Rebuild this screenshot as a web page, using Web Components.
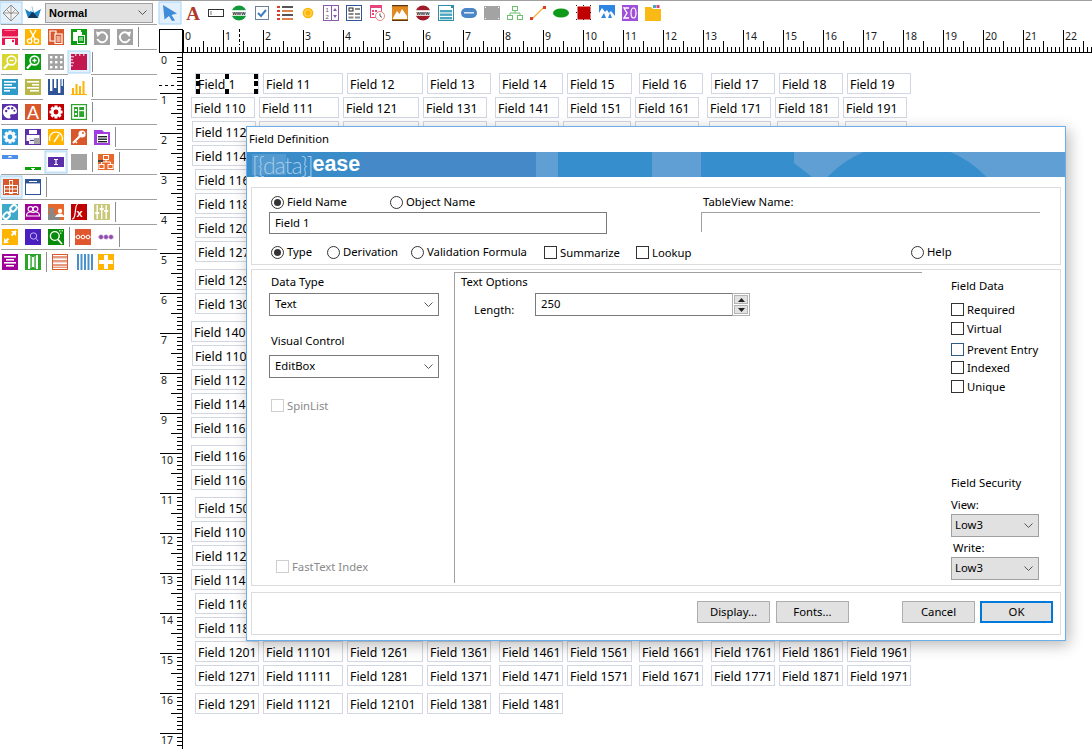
<!DOCTYPE html>
<html lang="en">
<head>
<meta charset="utf-8">
<title>Field Definition</title>
<style>
html,body{margin:0;padding:0;background:#fff;overflow:hidden}
body{width:1092px;height:749px;font:12.3px "Noto Sans","Open Sans",sans-serif;color:#000}
</style>
</head>
<body>
<ui-app>
  <div slot="left">
    <tool-row h="23" rule="1-157">
      <tool-icon name="diamond" on style="margin-left:1px"></tool-icon>
      <tool-icon name="origami" style="margin-left:-1px"></tool-icon>
      <ui-select style="width:108px;height:20px;margin-left:-3px" gray bold>Normal</ui-select>
    </tool-row>
    <tool-row rule="1-20 22-45 114-157">
      <tool-icon name="save"></tool-icon><tool-icon name="cut"></tool-icon><tool-icon name="copy"></tool-icon><tool-icon name="paste"></tool-icon><tool-icon name="undo"></tool-icon><tool-icon name="redo"></tool-icon><tool-sep></tool-sep>
    </tool-row>
    <tool-row rule="1-22 45-68 91-157">
      <tool-icon name="zoomout"></tool-icon><tool-icon name="zoomin"></tool-icon><tool-icon name="grid"></tool-icon><tool-icon name="redblock" on></tool-icon><tool-sep></tool-sep>
    </tool-row>
    <tool-row rule="1-43 91-157">
      <tool-icon name="alignl"></tool-icon><tool-icon name="alignr"></tool-icon><tool-icon name="hang"></tool-icon><tool-icon name="bars"></tool-icon><tool-sep></tool-sep>
    </tool-row>
    <tool-row rule="1-157">
      <tool-icon name="palette"></tool-icon><tool-icon name="fontA"></tool-icon><tool-icon name="gearred"></tool-icon><tool-icon name="board"></tool-icon><tool-sep></tool-sep>
    </tool-row>
    <tool-row rule="1-68 115-157">
      <tool-icon name="gearblue"></tool-icon><tool-icon name="printer"></tool-icon><tool-icon name="gauge"></tool-icon><tool-icon name="key"></tool-icon><tool-icon name="folderdoc"></tool-icon><tool-sep></tool-sep>
    </tool-row>
    <tool-row rule="1-157">
      <tool-icon name="bartop"></tool-icon><tool-icon name="barbottom"></tool-icon><tool-icon name="purplebox" on></tool-icon><tool-icon name="gray"></tool-icon><tool-sep></tool-sep><tool-icon name="network"></tool-icon><tool-sep></tool-sep>
    </tool-row>
    <tool-row rule="1-157">
      <tool-icon name="stack" on style="margin-left:1px;margin-right:6px"></tool-icon><tool-icon name="window"></tool-icon><tool-sep></tool-sep>
    </tool-row>
    <tool-row rule="1-157">
      <tool-icon name="link"></tool-icon><tool-icon name="people"></tool-icon><tool-icon name="person"></tool-icon><tool-icon name="fx"></tool-icon><tool-icon name="sliders"></tool-icon><tool-sep></tool-sep>
    </tool-row>
    <tool-row rule="1-157">
      <tool-icon name="expand"></tool-icon><tool-icon name="magpurple"></tool-icon><tool-icon name="maggreen"></tool-icon><tool-sep></tool-sep><tool-icon name="dotsorange"></tool-icon><tool-icon name="dotspurple"></tool-icon><tool-sep></tool-sep>
    </tool-row>
    <tool-row>
      <tool-icon name="center"></tool-icon><tool-icon name="colsgreen"></tool-icon><tool-sep></tool-sep><tool-icon name="rowsorange" style="margin-right:9px"></tool-icon><tool-icon name="colsblue" style="margin-right:5px"></tool-icon><tool-icon name="plus"></tool-icon>
    </tool-row>
  </div>
  <top-tools slot="top">
    <tool-icon name="arrow" on></tool-icon><tool-icon name="letterA"></tool-icon><tool-icon name="textbox"></tool-icon><tool-icon name="wwwgreen"></tool-icon><tool-icon name="check"></tool-icon><tool-icon name="list"></tool-icon><tool-icon name="radio"></tool-icon><tool-icon name="spin"></tool-icon><tool-icon name="table"></tool-icon><tool-icon name="calendar"></tool-icon><tool-icon name="image"></tool-icon><tool-icon name="wwwred"></tool-icon><tool-icon name="tabbed"></tool-icon><tool-icon name="button"></tool-icon><tool-icon name="grayh"></tool-icon><tool-icon name="tree"></tool-icon><tool-icon name="line"></tool-icon><tool-icon name="ellipse"></tool-icon><tool-icon name="redsq"></tool-icon><tool-icon name="mountain"></tool-icon><tool-icon name="sigma"></tool-icon><tool-icon name="folder"></tool-icon>
  </top-tools>
  <form-canvas slot="canvas"></form-canvas>
  <field-dialog slot="dialog"></field-dialog>
</ui-app>

<script>
/* ---------- helpers ---------- */
function define(name, css, html, extra){
  class C extends HTMLElement{
    constructor(){super();this.attachShadow({mode:'open'}).innerHTML='<style>'+css+'</style>'+html;}
    connectedCallback(){ if(extra) extra.call(this,this.shadowRoot); }
  }
  customElements.define(name,C);
}
const r=(x,y,w,h,f,o)=>`<rect x="${x}" y="${y}" width="${w}" height="${h}" fill="${f}"${o?` rx="${o}"`:''}/>`;
const bg=(f)=>r(0,0,16,16,f);
const W='#fff';
const gear=(f)=>bg(f)+`<g fill="#fff"><circle cx="8" cy="8" r="5"/><rect x="6.5" y="1.5" width="3" height="13"/><rect x="1.5" y="6.5" width="13" height="3"/><rect x="6.5" y="1.5" width="3" height="13" transform="rotate(45 8 8)"/><rect x="6.5" y="1.5" width="3" height="13" transform="rotate(-45 8 8)"/></g><circle cx="8" cy="8" r="2.4" fill="${f}"/>`;
const mag=(f,s,extra)=>bg(f)+`<circle cx="9.5" cy="6.5" r="4.4" fill="none" stroke="${s}" stroke-width="1.6"/><path d="M6.2 10L2 14.4" stroke="${s}" stroke-width="2.2"/>`+(extra||'');
const www=(c)=>`<circle cx="8" cy="8" r="7.6" fill="${c}"/><rect x="0" y="5.2" width="16" height="5.6" fill="#fff"/><text x="8" y="10" text-anchor="middle" font-family="Liberation Sans" font-size="5.6" font-weight="700" fill="#222">www</text>`;
const ICONS={
diamond:`<path d="M8 0L16 8 8 16 0 8Z" fill="#f2f2f2" stroke="#8a8a8a"/><path d="M8 0V16M0 8H16M3 4L8 9 13 4" stroke="#8a8a8a" fill="none" stroke-width=".8"/>`,
origami:`<path d="M0 4L5 7 7 1 9 8 16 4 13 13 3 13Z" fill="#1c86c8"/><path d="M3 13L7 7 9 8 13 13Z" fill="#12395c"/><path d="M5 6L7 1 8 7Z" fill="#fff"/>`,
save:bg('#e8174f')+r(3,0,10,6.5,'#e8174f')+r(2.5,1,11,1,'#f77a9c')+r(0,7.5,16,1.2,W)+r(3,10,10,4,W)+r(3,14,10,2,W)+r(10,10.8,2,2.4,'#e8174f'),
cut:bg('#ffb400')+`<path d="M5 1L10 10M11 1L6 10" stroke="#fff" stroke-width="1.5"/><circle cx="4.6" cy="12" r="2.2" fill="none" stroke="#fff" stroke-width="1.3"/><circle cx="11.4" cy="12" r="2.2" fill="none" stroke="#fff" stroke-width="1.3"/>`,
copy:bg('#d9582b')+`<path d="M2 2H8V12H2Z" fill="none" stroke="#fff" stroke-width="1.2"/><path d="M7 5H14V14.5H7Z" fill="#d9582b" stroke="#fff" stroke-width="1.2"/><path d="M8.5 8H12.5M8.5 10H12.5M8.5 12H12.5" stroke="#fff"/>`,
paste:bg('#0b9c12')+`<path d="M2 3H6V1H10V3H11V6H14V15H6V12H2Z" fill="#fff"/><path d="M7 7H13V14H7Z" fill="#0b9c12"/><path d="M8 9H12M8 11H12" stroke="#fff"/>`,
undo:bg('#a3a3a3')+`<path d="M4 5.4A5 5 0 1 1 3.4 10" fill="none" stroke="#fff" stroke-width="2"/><path d="M2 2.6L7.6 3.6 3.4 8Z" fill="#fff"/>`,
redo:bg('#a3a3a3')+`<path d="M12 5.4A5 5 0 1 0 12.6 10" fill="none" stroke="#fff" stroke-width="2"/><path d="M14 2.6L8.4 3.6 12.6 8Z" fill="#fff"/>`,
zoomout:mag('#d9d62e','#fff','<path d="M7.4 6.5H11.6" stroke="#fff" stroke-width="1.4"/>'),
zoomin:mag('#0b9c12','#fff','<path d="M7.4 6.5H11.6M9.5 4.4V8.6" stroke="#fff" stroke-width="1.4"/>'),
grid:bg('#a3a3a3')+[2,7,12].map(x=>[2,7,12].map(y=>r(x,y,2.4,2.4,W)).join('')).join(''),
redblock:bg('#c2174f')+r(0,2,3,1.4,'#f3b0c4')+r(0,5,2,1.4,'#f3b0c4')+r(0,8,3,1.4,'#f3b0c4')+r(0,11,2,1.4,'#f3b0c4')+r(4,0,1.4,2,'#f3b0c4')+r(8,0,1.4,2,'#f3b0c4')+r(12,0,1.4,2,'#f3b0c4'),
alignl:bg('#2f9bc9')+r(2,2,12,1.6,W)+r(2,5,8,1.6,W)+r(2,8,12,1.6,W)+r(2,11,6,1.6,W),
alignr:bg('#b8b84a')+r(2,2,12,1.6,W)+r(7,5,7,1.6,W)+r(2,8,12,1.6,W)+r(5,11,9,1.6,W),
hang:bg('#2f5597')+r(2,0,2.4,12,W)+r(6,0,2.4,9,W)+r(10,0,2.4,14,W)+r(13.5,0,1.4,7,W),
bars:r(0,0,16,16,W)+r(1,9,2,7,'#ffb400')+r(4.5,5,2,11,'#ffb400')+r(8,7,2,9,'#ffb400')+r(11.5,2,2,14,'#ffb400')+r(0,15,16,1,'#ffb400'),
palette:bg('#5b2fa8')+`<path d="M8 1.5C3.5 1.5 1 4.5 1 8s2.6 6.5 6 6.5c1.8 0 1.8-1.3 1.2-2.2-.6-1 .1-2 1.3-2H12c2 0 3-1.2 3-3 0-3.4-3-5.8-7-5.8Z" fill="#fff"/><g fill="#5b2fa8"><circle cx="4.2" cy="7" r="1.2"/><circle cx="6.6" cy="4.2" r="1.2"/><circle cx="10.2" cy="4.2" r="1.2"/><circle cx="12.4" cy="6.8" r="1"/></g>`,
fontA:bg('#d9582b')+`<text x="8" y="14.5" text-anchor="middle" font-family="Liberation Sans" font-size="18" fill="#fff">A</text>`,
gearred:gear('#c00000'),
board:r(0,0,16,16,'#2ca52c')+r(1.2,1.2,13.6,13.6,W)+r(3,3,10,10,'#2ca52c')+r(7,3,1.2,10,W)+r(8.2,6,4.8,1.2,W)+r(3.8,5,2.2,2,W)+r(3.8,9,2.2,2,W),
gearblue:gear('#2f9bd9'),
printer:bg('#5b2fa8')+r(4,1,8,4,W)+r(1.5,6,13,6,W)+r(4,9,7,6,'#eee')+r(9,9,6,6,'#a3a3a3')+r(5,11,4,1,'#5b2fa8'),
gauge:bg('#ffb400')+`<path d="M2 12A6.5 6.5 0 1 1 14 12" fill="none" stroke="#fff" stroke-width="1.2"/><path d="M6 13L11 5.5" stroke="#fff" stroke-width="1.4"/>`,
key:bg('#d9582b')+`<circle cx="11" cy="5" r="3.6" fill="#fff"/><circle cx="12" cy="4" r="1" fill="#d9582b"/><path d="M9 7L2 14" stroke="#fff" stroke-width="2.2"/><path d="M4 12L6 14" stroke="#fff" stroke-width="1.4"/>`,
folderdoc:`<path d="M0 1H8L10 3H16V16H0Z" fill="#a03ce0"/>`+r(3,5,11,9,W)+r(4,7,9,1.4,'#222')+r(4,9.5,9,1.4,'#222')+r(4,12,9,1.4,'#222'),
bartop:r(0,1,16,4,'#4a90e8')+r(6,2.5,4,1,W)+r(7,2,2,1,W),
barbottom:r(0,13,16,3,'#0aa00a')+r(6,14,4,1,W)+r(7,14,2,2,W),
purplebox:r(-1,-1,18,18,W)+r(0,3,16,10,'#5b2fa8')+r(6,5,4,1,W)+r(7.4,5,1.2,6,W)+r(6,10,4,1,W),
gray:bg('#a3a3a3'),
network:bg('#e8672b')+`<g fill="none" stroke="#fff" stroke-width="1"><rect x="5.5" y="1.5" width="5" height="4"/><rect x="1" y="10.5" width="5" height="4"/><rect x="10" y="10.5" width="5" height="4"/><path d="M8 5.5V8M3.5 10.5V8H12.5V10.5"/></g>`+r(0,6,5,2,'#444'),
stack:bg('#d9582b')+r(6.2,1,3.6,14,W)+r(1,6,14,1,W)+r(1,9.5,14,1,W)+r(1,6,1,9,W)+r(14,6,1,9,W)+r(1,13,14,1,W)+r(6.2,1,3.6,1,W)+r(7,2,2,3.5,'#d9582b')+r(7,7,2,2.5,'#d9582b')+r(7,10.5,2,2.5,'#d9582b'),
window:r(0,0,16,16,'#2f5597')+r(1,1,14,14,W)+r(1,1,14,3.4,'#2f5597')+r(4,2,8,1,W),
link:bg('#3fa9c9')+`<g fill="none" stroke="#fff" stroke-width="2"><rect x="8" y="1.8" width="7" height="5" rx="2.4" transform="rotate(-45 11.5 4.3)"/><rect x="1" y="9.2" width="7" height="5" rx="2.4" transform="rotate(-45 4.5 11.7)"/><path d="M6 10L10 6"/></g>`,
people:bg('#a0009a')+`<g fill="none" stroke="#fff" stroke-width="1.1"><circle cx="5.5" cy="5" r="2.4"/><circle cx="10.5" cy="5" r="2.4"/><path d="M1.5 12c0-3 2-4 4-4s2.500 .5 2.500 1c0-.5 .5-1 2.500-1s4 1 4 4Z"/></g>`,
person:bg('#e8672b')+`<circle cx="3.5" cy="6" r="2.8" fill="#888"/><path d="M0 16V11c0-2 2-3 3.500-3s4 1 4 3H12V16Z" fill="#888"/><circle cx="12" cy="7" r="2.2" fill="#fff"/><path d="M7 13c1-2 3-3.500 5-3.500s3 1 4 2.500V13Z" fill="#fff"/>`,
fx:bg('#c00000')+`<path d="M7 0C4.500 0 5 4 4 10 3.500 14 2.500 15 1 15" fill="none" stroke="#fff" stroke-width="1.2"/><text x="5.500" y="13" font-family="Liberation Sans" font-weight="700" font-size="11" fill="#fff">x</text>`,
sliders:bg('#c8c878')+r(2.500,1,1.4,14,W)+r(7,1,1.4,14,W)+r(11.500,1,1.4,14,W)+r(1.200,8,4,2,W)+r(5.700,4,4,2,W)+r(10.200,6,4,2,W),
expand:bg('#ffb400')+`<path d="M2 14L6.500 9.500M14 2L9.500 6.500" stroke="#fff" stroke-width="2"/><path d="M2 9V14H7ZM14 7V2H9Z" fill="#fff"/>`,
magpurple:bg('#4a1fc0')+`<circle cx="8.500" cy="7" r="3.200" fill="none" stroke="#c9b8f2" stroke-width="1"/><path d="M11 9.500L13 12" stroke="#c9b8f2"/>`,
maggreen:bg('#0a8a0a')+`<circle cx="6.800" cy="7" r="4.400" fill="none" stroke="#fff" stroke-width="1.400"/><path d="M10 10.500L14 15" stroke="#fff" stroke-width="1.800"/>`+r(11,1,1.500,1.500,'#9fe89f')+r(13.500,1,1.500,1.500,'#9fe89f')+r(12,3.500,1.500,1.500,'#9fe89f'),
dotsorange:bg('#e0562f')+`<path d="M0 8H16" stroke="#f5c2b0"/>`+[3,8,13].map(x=>`<circle cx="${x}" cy="8" r="1.800" fill="#e0562f" stroke="#fff"/>`).join(''),
dotspurple:`<path d="M0 8H16" stroke="#c9a3d6"/>`+[3,8,13].map(x=>`<circle cx="${x}" cy="8" r="2.200" fill="#8e4aa8" stroke="#c9a3d6" stroke-width=".6"/>`).join(''),
center:bg('#a0009a')+r(2,2,12,1.600,W)+r(4,5,8,1.600,W)+r(2,8,12,1.600,W)+r(4,11,8,1.600,W),
colsgreen:bg('#2aa52a')+r(3,1,2,14,W)+r(7,3,2,10,W)+r(11,1,2,14,W)+r(5.500,2,.8,12,'#bfe8bf')+r(9.500,2,.8,12,'#bfe8bf'),
rowsorange:r(0,0,16,16,'#d9582b')+r(1,1,14,14,'#fff')+[2,6,10].map(y=>r(1,y,14,2.400,'#e49a80')).join('')+r(1,13,14,1,'#e49a80'),
colsblue:[0,3.500,7,10.500,14].map(x=>r(x,0,2,16,'#4a90c8')).join(''),
plus:bg('#ffb400')+r(6,1,4,14,W)+r(1,6,14,4,W),
arrow:`<path d="M1 0L15 8.500 9.500 10 13 15.500 10 16 7 11 2.500 14.500Z" fill="#3f8dd8"/>`,
letterA:`<text x="8" y="15" text-anchor="middle" font-family="Liberation Serif" font-weight="700" font-size="19" fill="#b0392b">A</text>`,
textbox:r(0,4,16,8,'#333')+r(1,5,14,6,W)+r(2,6,2,4,'#bbb'),
wwwgreen:www('#109a3a'),
check:r(1,1,14,14,'#6d7f99')+r(2,2,12,12,W)+`<path d="M4 8L7 11 12 5" fill="none" stroke="#3f7fc0" stroke-width="2"/>`,
list:r(0,1,3,2,'#d9402b')+r(5,1,11,2,'#555')+r(0,5,3,2,'#d9402b')+r(5,5,11,2,'#d9824b')+r(0,9,3,2,'#d9402b')+r(5,9,11,2,'#555')+r(0,13,3,2,'#d9402b')+r(5,13,11,2,'#d9824b'),
radio:`<circle cx="8" cy="8" r="4.600" fill="#ffd35c" stroke="#ffb400" stroke-width="1.500"/><circle cx="8" cy="8" r="2.500" fill="#ffb400"/>`,
spin:r(0,0,16,16,'#8a5aa8')+r(1,1,14,14,W)+r(8,1,1,14,'#8a5aa8')+`<path d="M10 6L12 3 14 6ZM10 10L12 13 14 10Z" fill="#8a5aa8"/><text x="2.500" y="7" font-family="Liberation Sans" font-size="6" fill="#555">1</text><text x="2.500" y="14" font-family="Liberation Sans" font-size="6" fill="#555">2</text>`,
table:r(0,0,16,16,'#2f5597')+r(1,1,14,14,W)+r(2.500,2.500,5,4,'#222')+r(3.500,3.500,3,2,W)+r(9,3,5,2,'#8a8a8a')+r(2.500,8,5,2,'#8a8a8a')+r(9,8,5,2,'#8a8a8a')+r(2.500,11.500,5,2,'#8a8a8a')+r(9,11.500,5,2,'#8a8a8a'),
calendar:r(1,0,12,13,'#e8467a')+r(2,3,10,9,W)+r(3,5,2,2,'#e8467a')+r(6,5,2,2,'#e8467a')+r(3,8,2,2,'#e8467a')+`<circle cx="11" cy="11" r="4.500" fill="#fff" stroke="#d88"/><path d="M11 8.500V11L13 12.500" stroke="#555" fill="none"/>`,
image:r(0,0,16,16,'#e08a20')+r(1.200,1.200,13.600,13.600,'#e08a20')+`<path d="M1 13L5 6 7.500 9 10 4 15 11V14H1Z" fill="#fff"/><path d="M0 0H16V1.200H0ZM0 14.800H16V16H0Z" fill="#5a3a10"/>`,
wwwred:www('#a01a2a'),
tabbed:r(0,0,16,16,'#2f8fa8')+r(1,1,14,14,W)+r(1,1,11,3,'#fff')+r(13,1,2,2,'#2f8fa8')+r(2,5,12,2.400,'#4aa6bf')+r(2,8.500,12,2.400,'#4aa6bf')+r(2,12,12,2.400,'#4aa6bf'),
button:r(0,3,16,10,'#4a86c8',5)+r(3,7,10,1.600,'#d6e6f6'),
grayh:r(0,1,16,14,'#a3a3a3')+r(1,2,1,1,W)+r(14,2,1,1,W)+r(1,13,1,1,W)+r(14,13,1,1,W),
tree:`<g fill="none" stroke="#6dc06d"><rect x="5.500" y="1.500" width="5" height="4"/><rect x=".5" y="10.500" width="5" height="4"/><rect x="10.500" y="10.500" width="5" height="4"/><path d="M8 5.500V8M3 10.500V8H13V10.500"/></g>`,
line:`<path d="M2 14L14 2" stroke="#f2b134" stroke-width="1.200"/>`+r(0,12,3,3,'#d9402b')+r(13,1,3,3,'#d9402b'),
ellipse:`<ellipse cx="8" cy="8" rx="8" ry="4.500" fill="#0f9a1a"/>`,
redsq:r(1.500,1.500,13,13,'#c00000')+[0,7,14].map(x=>[0,14].map(y=>r(x,y,1,1,'#222')).join('')).join('')+r(0,7,1,1,'#222')+r(14,7,1,1,'#222'),
mountain:r(0,0,16,13,'#2f86e0')+`<path d="M0 13V8L3 3 6 7 8 5 10 8 12 6 16 11V13Z" fill="#fff"/><path d="M2 13L5 8 7 13Z M9 13L11 8 13 13Z" fill="#2f86e0"/>`,
sigma:r(0,0,16,16,'#a050d8')+`<path d="M7 3H2L5 8 2 13H7" fill="none" stroke="#fff" stroke-width="1.400"/><ellipse cx="11.500" cy="8" rx="2.500" ry="5" fill="none" stroke="#fff" stroke-width="1.200"/>`,
folder:`<path d="M0 2H6L8 4H16V16H0Z" fill="#fbb915"/>`+r(8,0,3,3,'#4aa6bf')+r(11.500,0,3,3,'#d9467a')
};

/* ---------- page shell ---------- */
define('ui-app',`
 :host{display:grid;grid-template-columns:158px 1fr;width:1092px;height:749px;box-sizing:border-box;border-top:1px solid #a0a0a0;position:relative;overflow:hidden;background:#fff}
 .work{display:grid;grid-template-rows:28px 1fr;min-width:0;height:748px}
 .sheet{display:grid;grid-template-columns:25px 1fr;grid-template-rows:24px 1fr;min-height:0}
 .corner{box-sizing:border-box;margin-left:1px;height:24px;border:1px solid #000;background:#fff}
 .over{position:absolute;left:246px;top:125px}
`,`<div class="left"><slot name="left"></slot></div>
<div class="work"><slot name="top"></slot>
  <div class="sheet"><div class="corner"></div><ruler-h></ruler-h><ruler-v></ruler-v><slot name="canvas"></slot></div>
</div>
<div class="over"><slot name="dialog"></slot></div>`);

define('tool-row',`
 :host{display:block}
 .row{display:flex;align-items:center;padding-left:2px}
 .rule{height:1px;position:relative}
 .rule i{position:absolute;top:0;height:1px;background:#a0a0a0}
`,`<div class="row"><slot></slot></div><div class="rule"></div>`,function(s){
  s.querySelector('.row').style.height=(this.getAttribute('h')||24)+'px';
  const rule=s.querySelector('.rule');
  (this.getAttribute('rule')||'').split(' ').filter(Boolean).forEach(p=>{
    const [a,b]=p.split('-').map(Number);const i=document.createElement('i');
    i.style.left=a+'px';i.style.width=(b-a)+'px';rule.appendChild(i);
  });
});
define('tool-sep',`:host{display:block;flex:none;width:1px;height:20px;background:#8c8c8c;margin-left:-2px;margin-right:5px}`,``);
define('tool-icon',`
 :host{display:block;flex:none;width:16px;height:16px;margin-right:7px;position:relative}
 :host([on]){background:#e2f0fb;box-shadow:0 0 0 2.5px #e2f0fb,0 0 0 3.5px #a6d4f6}
 svg{display:block;width:16px;height:16px;overflow:visible}
`,`<svg viewBox="0 0 16 16" aria-hidden="true"></svg>`,function(s){
  s.querySelector('svg').innerHTML=ICONS[this.getAttribute('name')]||'';
});
define('top-tools',`
 :host{display:flex;align-items:center;height:24px;padding-left:4px;margin-top:0}
 ::slotted(tool-icon){margin-right:7px}
`,`<slot></slot>`);

/* ---------- rulers ---------- */
const NS='font-family="Noto Sans" font-size="10.5" fill="#1c1c1c"';
define('ruler-h',`:host{display:block;height:24px;overflow:hidden}svg{display:block}`,``,function(s){
  let o='';
  for(let x=0;x<909;x+=4){
    const k=x%40===0?1:(x%20===0?2:3);
    const y=k===1?1:(k===2?12:18);
    o+=`<rect x="${x}" y="${y}" width="1" height="${23-y}"/>`;
    if(k===1)o+=`<text x="${x+2}" y="11" ${NS}>${x/40}</text>`;
  }
  o+=`<rect x="0" y="23" width="909" height="1"/><path d="M56 0V16" stroke="#000" stroke-dasharray="2.500 2.500"/>`;
  s.innerHTML+=`<svg width="909" height="24" shape-rendering="crispEdges">${o}</svg>`;
});
define('ruler-v',`:host{display:block;width:25px;overflow:hidden;height:696px}svg{display:block}`,``,function(s){
  let o='';
  for(let y=0;y<696;y+=4){
    const k=y%40===0?1:(y%20===0?2:3);
    const x=k===1?2:(k===2?13:19);
    if(y>0)o+=`<rect x="${x}" y="${y}" width="${25-x}" height="1"/>`;
    if(k===1)o+=`<text x="3" y="${y+11}" ${NS}>${y/40}</text>`;
  }
  o+=`<rect x="24" y="0" width="1" height="696"/><path d="M1 32H20" stroke="#000" stroke-dasharray="3 3"/>`;
  s.innerHTML+=`<svg width="25" height="696" shape-rendering="crispEdges">${o}</svg>`;
});

/* ---------- free canvas of fields ---------- */
define('form-field',`
 :host{position:absolute;display:flex;align-items:center;box-sizing:border-box;height:21px;padding:2px 0 0 2px;border:1px solid #d2d6e2;background:#fff;color:#000;white-space:nowrap;overflow:hidden;font-size:12.3px}
`,`<slot></slot>`);
define('sel-handle',`:host{position:absolute;width:4px;height:5px;background:#000}`,``);
define('form-canvas',`:host{display:block;position:relative;overflow:hidden;height:696px}`,``,function(s){
  const X=183,Y=53;
  const place=(x,y,w,t)=>{const f=document.createElement('form-field');f.style.left=(x-X)+'px';f.style.top=(y-Y)+'px';f.style.width=w+'px';f.textContent=t||'';s.appendChild(f);};
  const c1=[[195,64],[263,80],[347,76],[427,64],[499,64],[567,65],[639,64],[711,64],[779,64],[847,64]];
  const c2=[[191,64],[259,80],[343,76],[423,64],[495,64],[567,64],[635,64],[707,64],[775,64],[843,64]];
  ['1','11','12','13','14','15','16','17','18','19'].forEach((n,i)=>place(c1[i][0],73,c1[i][1],'Field '+n));
  ['110','111','121','131','141','151','161','171','181','191'].forEach((n,i)=>place(c2[i][0],97,c2[i][1],'Field '+n));
  [[259,80],[343,76],[423,64],[495,64],[563,68],[635,64],[709,62],[777,62],[845,62]].forEach(c=>place(c[0],121,c[1],''));
  [[192,121,'112'],[192,145,'114'],[195,169,'116'],[195,193,'118'],[195,217,'120'],[195,241,'127'],[195,269,'129'],[195,293,'130'],
   [191,321,'140'],[192,345,'110'],[191,369,'112'],[191,393,'114'],[191,417,'116'],[191,445,'116'],[191,469,'116'],[195,497,'150'],
   [191,521,'110'],[192,545,'112'],[191,569,'114'],[195,593,'116'],[195,617,'118']].forEach(p=>place(p[0],p[1],64,'Field '+p[2]));
  ['1201','11101','1261','1361','1461','1561','1661','1761','1861','1961'].forEach((n,i)=>place(c1[i][0],641,c1[i][1],'Field '+n));
  ['1271','11111','1281','1371','1471','1571','1671','1771','1871','1971'].forEach((n,i)=>place(c1[i][0],665,c1[i][1],'Field '+n));
  ['1291','11121','12101','1381','1481'].forEach((n,i)=>place(c1[i][0],693,c1[i][1],'Field '+n));
  [[196,74],[225,74],[254,74],[196,81],[254,81],[196,89],[225,89],[254,89]].forEach(h=>{
    const e=document.createElement('sel-handle');e.style.left=(h[0]-X)+'px';e.style.top=(h[1]-Y)+'px';s.appendChild(e);
  });
});

/* ---------- dialog controls ---------- */
define('ui-radio',`
 :host{display:flex;align-items:center;gap:3px;height:13px;white-space:nowrap}
 i{flex:none;box-sizing:border-box;width:13px;height:13px;border:1px solid #333;border-radius:50%;background:#fff;display:flex;align-items:center;justify-content:center}
 :host([checked]) i::after{content:"";width:7px;height:7px;border-radius:50%;background:#333}
 span{padding-bottom:2px}
`,`<i></i><span><slot></slot></span>`);
define('ui-check',`
 :host{display:flex;align-items:center;gap:3px;height:13px;white-space:nowrap}
 i{flex:none;box-sizing:border-box;width:13px;height:13px;border:1px solid #333;background:#fff}
 :host([tint]) i{border-color:#2d5a80}
 :host([disabled]){color:#8a8a8a}
 :host([disabled]) i{border-color:#cfcfcf}
`,`<i></i><span><slot></slot></span>`);
define('ui-select',`
 :host{display:flex;align-items:center;justify-content:space-between;box-sizing:border-box;height:23px;padding:0 5px;border:1px solid #7a7a7a;background:#fff}
 :host([gray]){background:#e1e1e1;border-color:#a0a0a0;padding-left:3px}
 :host([bold]){font:700 11px "Liberation Sans",sans-serif;letter-spacing:.1px;padding-left:3px}
 span{padding-bottom:2px}
 :host([bold]) span{padding-bottom:0}
 svg{flex:none;display:block}
`,`<span><slot></slot></span><svg width="9" height="5" viewBox="0 0 9 5" aria-hidden="true"><path d="M.5 .5L4.500 4.500 8.500 .5" fill="none" stroke="#555" stroke-width="1"/></svg>`);
define('ui-btn',`
 :host{display:flex;align-items:center;justify-content:center;box-sizing:border-box;width:73px;height:22px;padding-bottom:2px;background:#e1e1e1;border:1px solid #adadad}
 :host([primary]){border:2px solid #0078d7}
`,`<slot></slot>`);
define('ui-spin',`
 :host{display:flex;width:215px;height:23px}
 .box{flex:1;box-sizing:border-box;display:flex;align-items:center;padding:0 0 2px 5px;border:1px solid #7a7a7a;border-right:0;background:#fff}
 .arrows{box-sizing:border-box;width:18px;border:1px solid #b0b0b0;padding:1px;display:flex;flex-direction:column;gap:1px;background:#fff}
 .arrows b{flex:1;background:#e1e1e1;border:1px solid #b4b4b4;display:flex;align-items:center;justify-content:center}
 svg{display:block}
`,`<div class="box"><slot></slot></div><div class="arrows"><b><svg width="7" height="4"><path d="M3.500 0L7 4H0Z" fill="#222"/></svg></b><b><svg width="7" height="4"><path d="M0 0H7L3.500 4Z" fill="#222"/></svg></b></div>`);

define('dialog-banner',`
 :host{display:block;position:relative;height:25px;overflow:hidden;background:#368fcc}
 svg{position:absolute;inset:0}
 .logo{position:relative;display:flex;align-items:center;height:25px;padding-left:5px;line-height:25px;white-space:nowrap}
 .a{font:300 23px Lato,"Liberation Sans",sans-serif;letter-spacing:-1px;color:#a9cbe8}
 .b{font:700 21.500px "Liberation Sans",sans-serif;color:#fff;letter-spacing:-.1px}
`,`<svg width="818" height="25" aria-hidden="true">
  <defs><linearGradient id="g" x1="0" x2="1"><stop offset="0" stop-color="#3a8cc9"/><stop offset=".38" stop-color="#3a8cc9"/><stop offset=".4" stop-color="#4589c9"/><stop offset="1" stop-color="#4589c9"/></linearGradient></defs>
  <rect width="289" height="25" fill="url(#g)"/>
  <rect x="289" width="22" height="25" fill="#5f9fd3"/>
  <rect x="405" width="49" height="25" fill="#5f9fd3"/>
  <path d="M547 0H818V25H565L547 11Z" fill="#5f9fd3"/>
  <circle cx="660" cy="101" r="110" fill="#368fcc"/>
  <rect x="5" y="2" width="34" height="21" fill="#fff" opacity=".13"/>
</svg><div class="logo"><span class="a">[{data}]</span><span class="b">ease</span></div>`);

define('field-dialog',`
 :host{display:block;box-sizing:border-box;width:820px;height:515px;background:#fff;border:1px solid #6caeea;box-shadow:3px 4px 14px rgba(0,0,0,.28);color:#000;font-size:11.3px}
 .title{height:25px;box-sizing:border-box;display:flex;align-items:center;padding:0 0 2px 2px}
 .panel{box-sizing:border-box;width:810px;margin-left:4px;border:1px solid #dcdcdc}
 .top{margin-top:10px;height:78px;padding:8px 0 0 19px;display:grid;grid-template-columns:119px 313px 1fr;grid-template-rows:13px 22px 13px;row-gap:3px}
 .top .tv-label{margin-top:-2px}
 .name{grid-column:1 / 3;box-sizing:border-box;margin-left:-2px;width:338px;height:22px;border:1px solid #7a7a7a;display:flex;align-items:center;padding:0 0 2px 5px}
 .tv{box-sizing:border-box;margin-left:-2px;width:339px;height:20px;border-top:1px solid #a0a0a0;border-left:1px solid #a0a0a0}
 .opts{grid-column:1 / 4;display:flex;margin-top:9px}
 .opts>*{flex:none}
 .main{margin-top:4px;height:317px;display:grid;grid-template-columns:202px 468px 1fr}
 .col1{display:flex;flex-direction:column;padding:4px 0 12px 17px}
 .col1 .lab{margin-left:2px;line-height:16px}
 .group{margin-top:2px;height:311px;box-sizing:border-box;border-top:1px solid #a0a0a0;border-left:1px solid #a0a0a0;padding:1px 0 0 6px}
 .group .lab{line-height:16px}
 .len{display:flex;align-items:flex-start;margin:3px 0 0 13px}
 .len span{width:61px;padding-top:9px;line-height:16px}
 .col3{display:flex;flex-direction:column;padding:8px 21px 5px 29px}
 .col3 .lab{line-height:16px}
 .bottom{margin-top:6px;height:43px;display:flex;padding:8px 0 0 445px;gap:6px}
`,`<div class="title">Field Definition</div>
<dialog-banner></dialog-banner>
<div class="panel top">
  <ui-radio checked>Field Name</ui-radio><ui-radio>Object Name</ui-radio><span class="tv-label">TableView Name:</span>
  <div class="name">Field 1</div><div class="tv"></div>
  <div class="opts">
    <ui-radio checked style="width:56px">Type</ui-radio><ui-radio style="width:84px">Derivation</ui-radio><ui-radio style="width:133px">Validation Formula</ui-radio>
    <ui-check style="width:92px">Summarize</ui-check><ui-check style="width:275px">Lookup</ui-check><ui-radio>Help</ui-radio>
  </div>
</div>
<div class="panel main">
  <div class="col1">
    <span class="lab">Data Type</span>
    <ui-select style="width:170px;margin-top:3px">Text</ui-select>
    <span class="lab" style="margin-top:17px">Visual Control</span>
    <ui-select style="width:170px;margin-top:6px">EditBox</ui-select>
    <ui-check disabled style="margin:21px 0 0 2px">SpinList</ui-check>
    <ui-check disabled style="margin:auto 0 0 7px">FastText Index</ui-check>
  </div>
  <div class="group">
    <span class="lab">Text Options</span>
    <div class="len"><span>Length:</span><ui-spin>250</ui-spin></div>
  </div>
  <div class="col3">
    <span class="lab">Field Data</span>
    <ui-check style="margin-top:9px">Required</ui-check>
    <ui-check style="margin-top:6px">Virtual</ui-check>
    <ui-check tint style="margin-top:8px">Prevent Entry</ui-check>
    <ui-check style="margin-top:5px">Indexed</ui-check>
    <ui-check style="margin-top:6px">Unique</ui-check>
    <span class="lab" style="margin-top:auto">Field Security</span>
    <span class="lab" style="margin-top:6px">View:</span>
    <ui-select gray style="width:88px;margin-top:1px">Low3</ui-select>
    <span class="lab" style="margin:3px 0 0 2px">Write:</span>
    <ui-select gray style="width:88px;margin-top:1px">Low3</ui-select>
  </div>
</div>
<div class="panel bottom">
  <ui-btn>Display...</ui-btn><ui-btn>Fonts...</ui-btn>
  <ui-btn style="margin-left:47px">Cancel</ui-btn><ui-btn primary style="margin-left:-1px">OK</ui-btn>
</div>`);
</script>
</body>
</html>
